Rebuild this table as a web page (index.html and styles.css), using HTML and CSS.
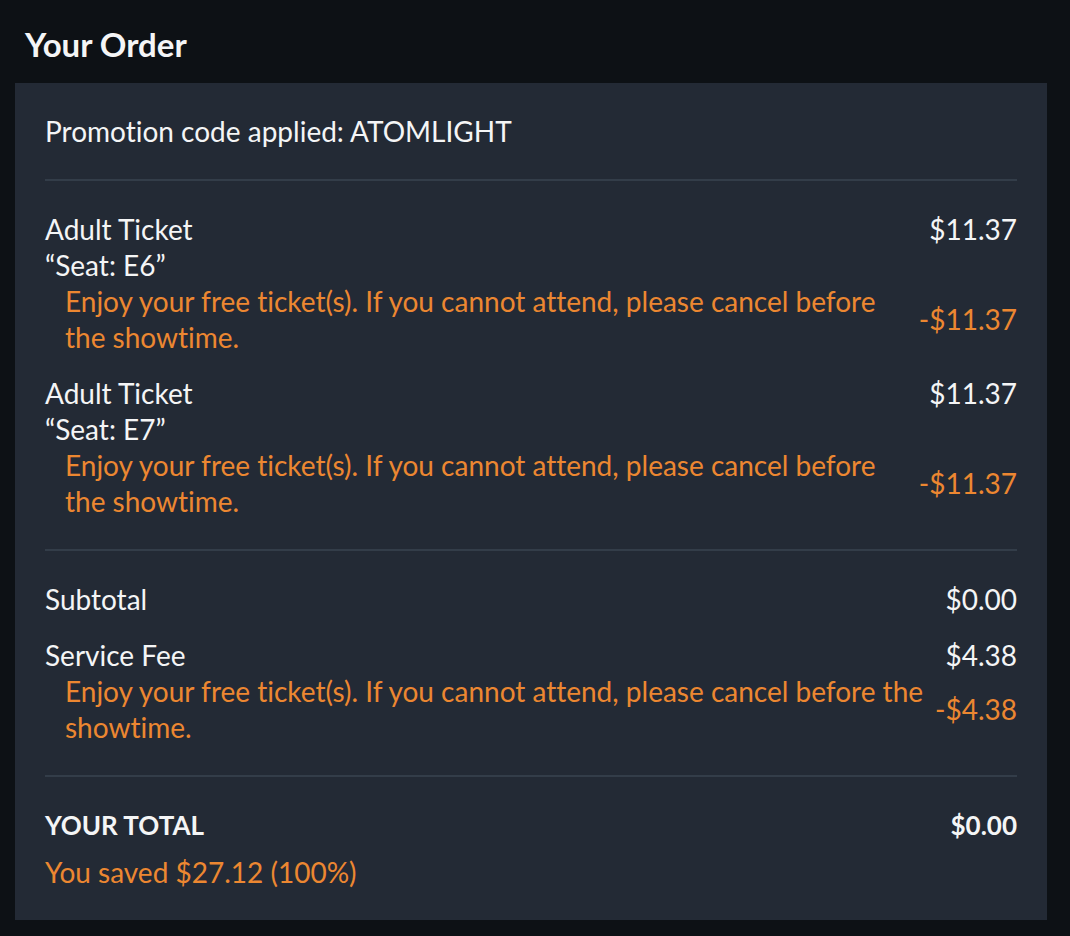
FILE: index.html
```html
<!DOCTYPE html>
<html>
<head>
<meta charset="utf-8">
<link rel="stylesheet" href="styles.css">
</head>
<body>
<div class="page">
  <h1 class="title">Your Order</h1>
  <div class="card">
    <div class="section">
      <div class="promo">Promotion code applied: ATOMLIGHT</div>
    </div>
    <div class="divider"></div>
    <div class="section items">
      <div class="item">
        <div class="row"><span>Adult Ticket</span><span>$11.37</span></div>
        <div class="row"><span>“Seat: E6”</span></div>
        <div class="row discount"><span class="dtext">Enjoy your free ticket(s). If you cannot attend, please cancel before the showtime.</span><span class="dprice">-$11.37</span></div>
      </div>
      <div class="item">
        <div class="row"><span>Adult Ticket</span><span>$11.37</span></div>
        <div class="row"><span>“Seat: E7”</span></div>
        <div class="row discount"><span class="dtext">Enjoy your free ticket(s). If you cannot attend, please cancel before the showtime.</span><span class="dprice">-$11.37</span></div>
      </div>
    </div>
    <div class="divider"></div>
    <div class="section items">
      <div class="item">
        <div class="row"><span>Subtotal</span><span>$0.00</span></div>
      </div>
      <div class="item">
        <div class="row"><span>Service Fee</span><span>$4.38</span></div>
        <div class="row discount"><span class="dtext">Enjoy your free ticket(s). If you cannot attend, please cancel before the showtime.</span><span class="dprice">-$4.38</span></div>
      </div>
    </div>
    <div class="divider"></div>
    <div class="section">
      <div class="row total"><span>YOUR TOTAL</span><span>$0.00</span></div>
      <div class="saved">You saved $27.12 (100%)</div>
    </div>
  </div>
</div>
</body>
</html>
```
FILE: styles.css
```css
html, body {
  margin: 0;
  padding: 0;
  background: #0d1115;
}
body {
  font-family: "Lato", "Noto Sans", sans-serif;
  font-variant-ligatures: none;
  color: #f4f5f6;
  width: 1070px;
  height: 936px;
  overflow: hidden;
}
.page {
  padding: 0 23px 0 15px;
}
.title {
  margin: 0;
  padding: 26px 0 0 10px;
  height: 83px;
  box-sizing: border-box;
  font-size: 33px;
  font-weight: 700;
  line-height: 36px;
}
.card {
  background: #232a35;
  padding: 30px 30px 30px;
}
.section {
  font-size: 28px;
  line-height: 36px;
}
.divider {
  height: 2px;
  background: #333d49;
  margin: 30px 0 30px;
}
.items {
  display: flex;
  flex-direction: column;
  gap: 20px;
}
.row {
  display: flex;
  justify-content: space-between;
  align-items: center;
}
.discount {
  color: #ec8731;
  padding-left: 20px;
}
.dtext {
  flex: 1;
}
.dprice {
  flex: none;
}
.total {
  font-weight: 700;
  font-size: 26px;
}
.saved {
  color: #ec8731;
  margin-top: 11px;
}
```
